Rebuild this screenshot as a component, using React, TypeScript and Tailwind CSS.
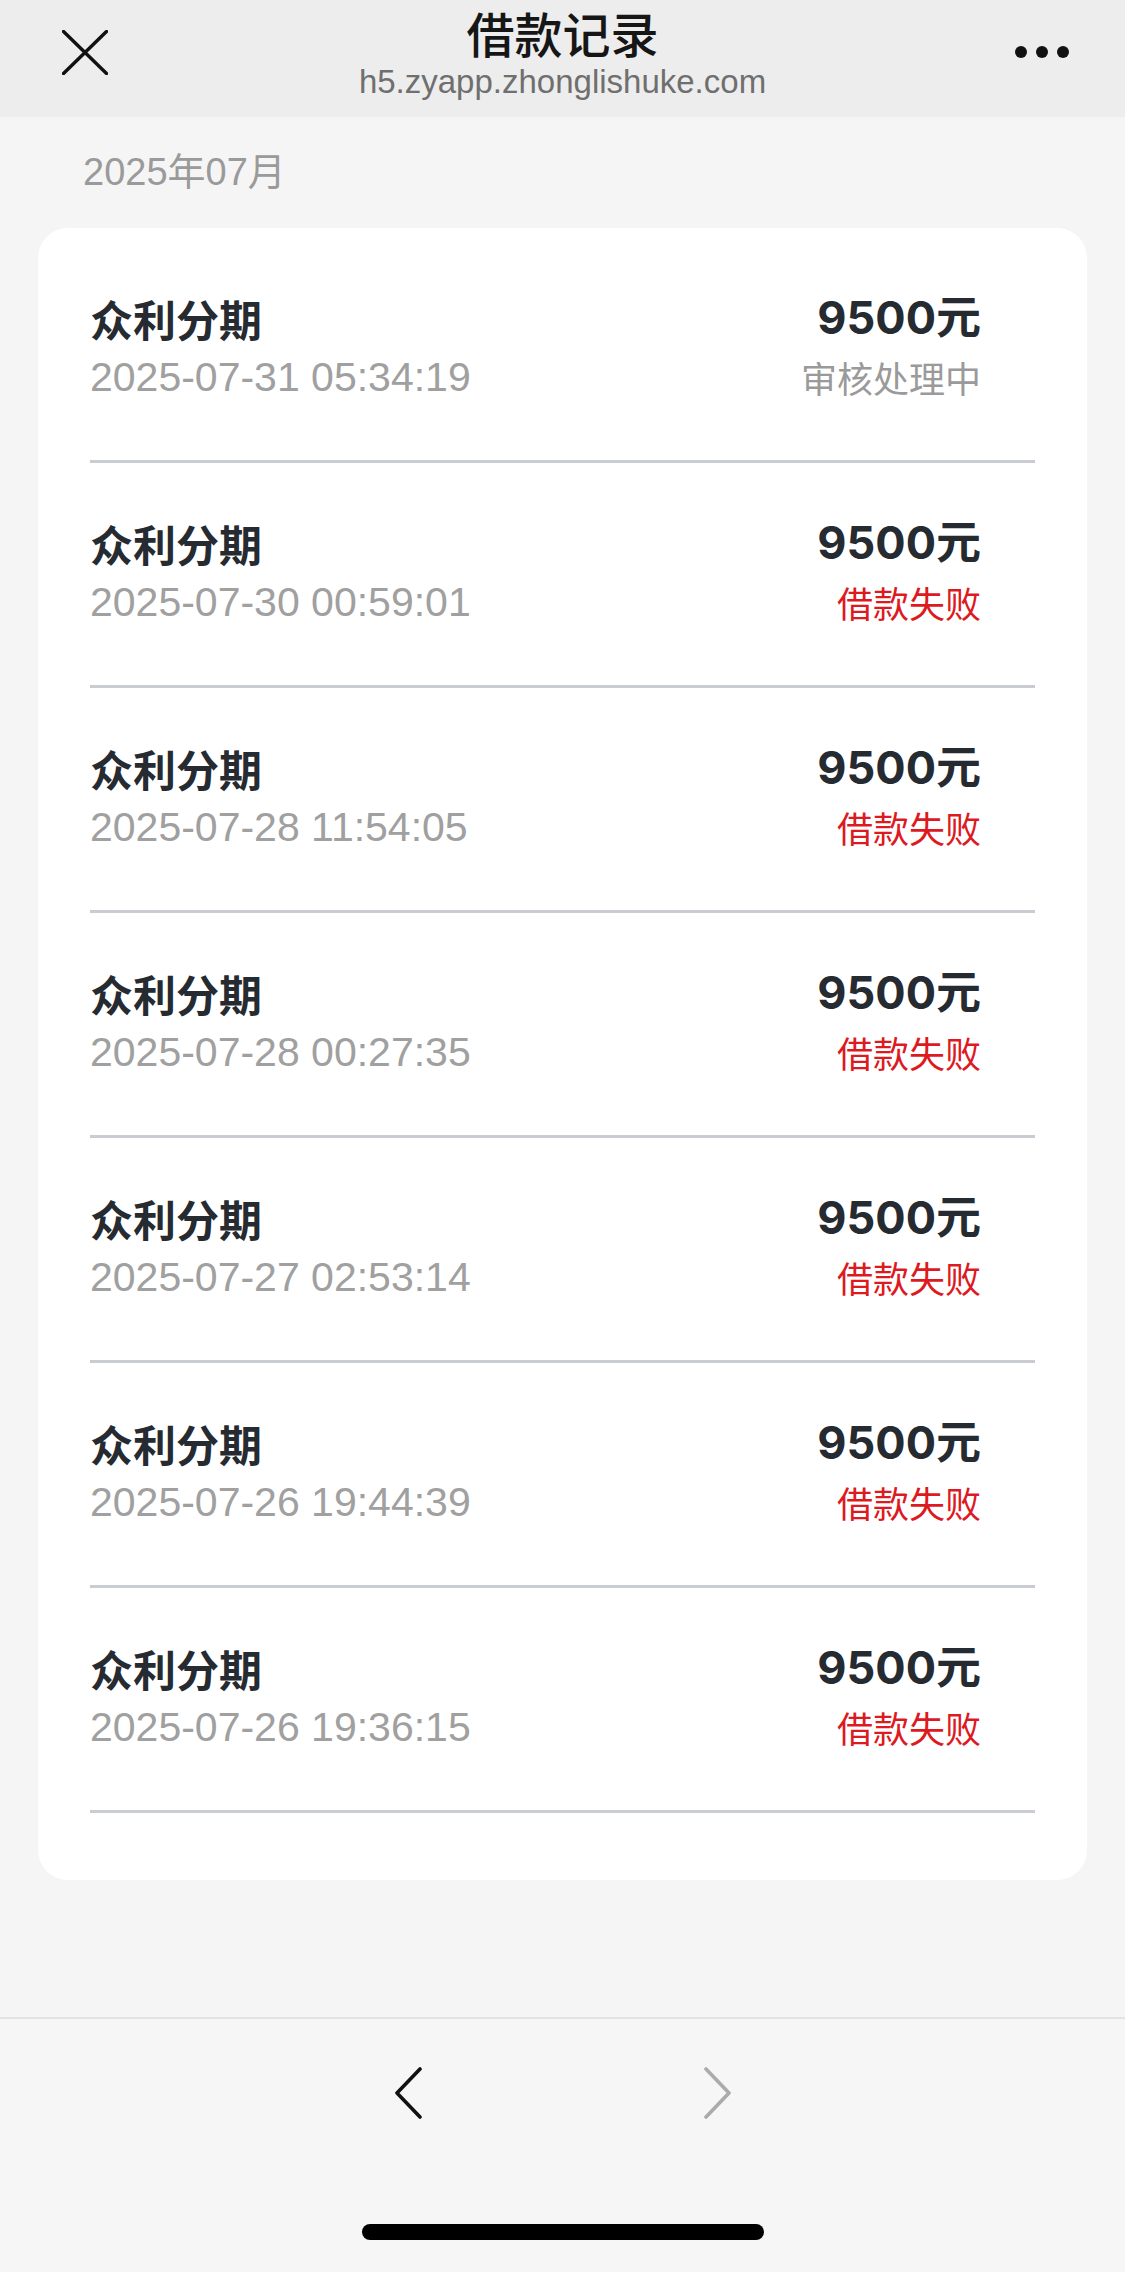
import React from "react";

const rows: { time: string; status: string; failed: boolean }[] = [
  { time: "2025-07-31 05:34:19", status: "审核处理中", failed: false },
  { time: "2025-07-30 00:59:01", status: "借款失败", failed: true },
  { time: "2025-07-28 11:54:05", status: "借款失败", failed: true },
  { time: "2025-07-28 00:27:35", status: "借款失败", failed: true },
  { time: "2025-07-27 02:53:14", status: "借款失败", failed: true },
  { time: "2025-07-26 19:44:39", status: "借款失败", failed: true },
  { time: "2025-07-26 19:36:15", status: "借款失败", failed: true },
];

const cjk = '[font-family:"Noto_Sans_CJK_SC",sans-serif]';

export default function App() {
  return (
    <div className="h-[2272px] w-[1125px] flex flex-col bg-[#f5f5f5] overflow-hidden">
      {/* Header */}
      <header className="h-[117px] shrink-0 bg-[#ededed] grid grid-cols-[1fr_auto_1fr] items-start">
        <div className="pl-[62px] pt-[30px]">
          <svg width="46" height="45" viewBox="0 0 46 45" fill="none">
            <path d="M1.5 1.5 L44.5 43.5 M44.5 1.5 L1.5 43.5" stroke="#111" strokeWidth="3.4" strokeLinecap="round" />
          </svg>
        </div>
        <div className="flex flex-col items-center pt-[10px]">
          <div className="text-[48px] leading-[54px] font-medium text-[#161616] [font-family:'Liberation_Sans','Noto_Sans_CJK_SC',sans-serif]">
            借款记录
          </div>
          <div className="text-[33px] leading-[36px] text-[#6f6f6f] [font-family:'Liberation_Sans',sans-serif]">
            h5.zyapp.zhonglishuke.com
          </div>
        </div>
        <div className="flex justify-end pr-[56px] pt-[46px] gap-[9px]">
          <span className="w-[12px] h-[12px] rounded-full bg-[#111]" />
          <span className="w-[12px] h-[12px] rounded-full bg-[#111]" />
          <span className="w-[12px] h-[12px] rounded-full bg-[#111]" />
        </div>
      </header>

      {/* Content */}
      <main className="shrink-0">
        <div className="pl-[83px] pt-[33px] pb-[34px] text-[38px] leading-[44px] text-[#9a9a9a] [font-family:'Liberation_Sans','Noto_Sans_CJK_SC',sans-serif]">
          2025年07月
        </div>
        <div className="mx-[38px] bg-white rounded-[30px] px-[52px] pt-[10px] pb-[67px]">
          {rows.map((r, i) => (
            <div key={i} className="pt-[55px] pb-[59px] border-b-[3px] border-[#c9cdd3]">
              <div className="flex justify-between items-center h-[50px] pr-[54px]">
                <span className={`text-[43px] leading-[50px] font-bold text-[#262a31] ${cjk}`}>众利分期</span>
                <span className="text-[45px] leading-[50px] font-bold text-[#262a31] [font-family:Inter,'Noto_Sans_CJK_SC',sans-serif]">
                  9500元
                </span>
              </div>
              <div className="flex justify-between items-center h-[48px] mt-[10px] pr-[54px]">
                <span className="text-[41px] leading-[48px] text-[#a0a0a0] [font-family:'Liberation_Sans',sans-serif]">
                  {r.time}
                </span>
                <span
                  className={`text-[36px] leading-[48px] ${cjk} ${r.failed ? "text-[#dc1a1f]" : "text-[#9a9a9a]"}`}
                >
                  {r.status}
                </span>
              </div>
            </div>
          ))}
        </div>
      </main>

      <div className="flex-1" />

      {/* Bottom toolbar */}
      <footer className="h-[255px] shrink-0 border-t-[2px] border-[#e2e2e2] bg-[#f6f6f6] flex flex-col items-center">
        <div className="flex items-center gap-[278px] pt-[48px]">
          <svg width="30" height="52" viewBox="0 0 30 52" fill="none">
            <path d="M26 2 L3 26 L26 50" stroke="#111" strokeWidth="3.6" strokeLinecap="round" strokeLinejoin="round" />
          </svg>
          <svg width="30" height="52" viewBox="0 0 30 52" fill="none">
            <path d="M4 2 L27 26 L4 50" stroke="#ababab" strokeWidth="3.6" strokeLinecap="round" strokeLinejoin="round" />
          </svg>
        </div>
        <div className="flex-1" />
        <div className="w-[402px] h-[16px] rounded-full bg-black mb-[32px]" />
      </footer>
    </div>
  );
}
